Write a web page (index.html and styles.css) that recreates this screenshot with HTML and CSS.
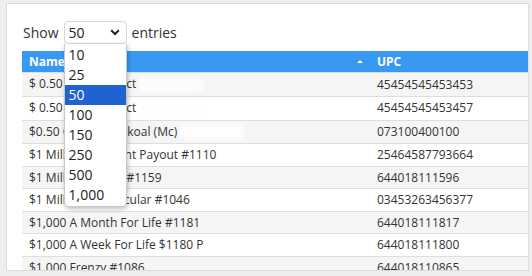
FILE: index.html
```html
<!DOCTYPE html>
<html lang="en">
  <head>
    <meta charset="UTF-8" />
    <meta name="viewport" content="width=device-width, initial-scale=1.0" />
    <title>Products</title>
    <link rel="stylesheet" href="styles.css">
  </head>
  <body>
    <div class="card">
      <div class="length">
        <span>Show</span>
        <div class="picker">
          <div class="picker-box">
            <span>50</span>
            <svg class="chev" width="10" height="7" viewBox="0 0 10 7"><path d="M1.2 1.3 L5 5 L8.8 1.3" fill="none" stroke="#222" stroke-width="2"/></svg>
          </div>
          <ul class="picker-list">
            <li>10</li>
            <li>25</li>
            <li class="on">50</li>
            <li>100</li>
            <li>150</li>
            <li>250</li>
            <li>500</li>
            <li>1,000</li>
          </ul>
        </div>
        <span>entries</span>
      </div>
      <table class="grid">
        <thead>
          <tr>
            <th class="col-name">Name <span class="sort"></span></th>
            <th>UPC</th>
          </tr>
        </thead>
        <tbody>
          <tr><td>$ 0.50 Test Product <span class="blur"></span></td><td>45454545453453</td></tr>
          <tr><td>$ 0.50 Test Product <span class="blur"></span></td><td>45454545453457</td></tr>
          <tr><td>$0.50 Candy Charkoal (Mc) <span class="blur"></span></td><td>073100400100</td></tr>
          <tr><td>$1 Million A Instant Payout #1110</td><td>25464587793664</td></tr>
          <tr><td>$1 Million Frenzy #1159</td><td>644018111596</td></tr>
          <tr><td>$1 Million Spectacular #1046</td><td>03453263456377</td></tr>
          <tr><td>$1,000 A Month For Life #1181</td><td>644018111817</td></tr>
          <tr><td>$1,000 A Week For Life $1180 P</td><td>644018111800</td></tr>
          <tr><td>$1,000 Frenzy #1086</td><td>644018110865</td></tr>
        </tbody>
      </table>
    </div>
  </body>
</html>
```

FILE: styles.css
```css
html, body {
  margin: 0;
  height: 100%;
  overflow: hidden;
}
body {
  background-color: #eeeeee;
  font-family: "Open Sans", "Liberation Sans", sans-serif;
  color: #333;
  padding: 3px 3px 0 6px;
  box-sizing: border-box;
}
.card {
  background-color: #fff;
  border: 1px solid #dcdcdc;
  height: 268px;
  padding: 16px 0 0 15px;
  box-sizing: border-box;
  overflow: hidden;
}
.length {
  display: flex;
  align-items: center;
  gap: 5px;
  font-size: 14px;
  height: 24px;
  margin: 0 0 7px 1px;
}
.picker {
  position: relative;
}
.picker-box {
  width: 63px;
  height: 23px;
  box-sizing: border-box;
  border: 1px solid #d6d6d6;
  border-radius: 4px;
  display: flex;
  align-items: center;
  justify-content: space-between;
  padding: 0 6px 0 4px;
  font-size: 14px;
  color: #222;
}
.chev {
  display: block;
}
.picker-list {
  position: absolute;
  left: 0;
  top: 23px;
  width: 61px;
  margin: 0;
  padding: 1px 0 1px;
  list-style: none;
  background-color: #fff;
  border: 1px solid #c8c8c8;
  border-top: none;
  border-radius: 0 0 5px 5px;
  box-shadow: 1px 2px 5px rgba(0, 0, 0, 0.25);
  z-index: 5;
}
.picker-list li {
  height: 20px;
  line-height: 20px;
  padding-left: 4px;
  font-size: 14px;
  color: #222;
}
.picker-list li.on {
  background-color: #1f62d0;
  color: #fff;
}
.grid {
  width: 100%;
  border-collapse: collapse;
  font-size: 12px;
}
.grid th {
  background-color: #3899f3;
  color: #fff;
  text-align: left;
  font-weight: bold;
  padding: 3px 7px;
  line-height: 15px;
}
.col-name {
  width: 334px;
  position: relative;
}
.sort {
  position: absolute;
  right: 7px;
  top: 9px;
  width: 0;
  height: 0;
  border-left: 3px solid transparent;
  border-right: 3px solid transparent;
  border-bottom: 3px solid #fff;
}
.grid td {
  padding: 4px 7px;
  line-height: 13.5px;
  border-top: 1px solid #dedede;
  white-space: nowrap;
}
.grid tbody tr:nth-child(odd) {
  background-color: #f5f5f5;
}
.blur {
  display: inline-block;
  width: 64px;
  height: 14px;
  vertical-align: middle;
  background-color: #fdfdfd;
  filter: blur(2px);
}
```
